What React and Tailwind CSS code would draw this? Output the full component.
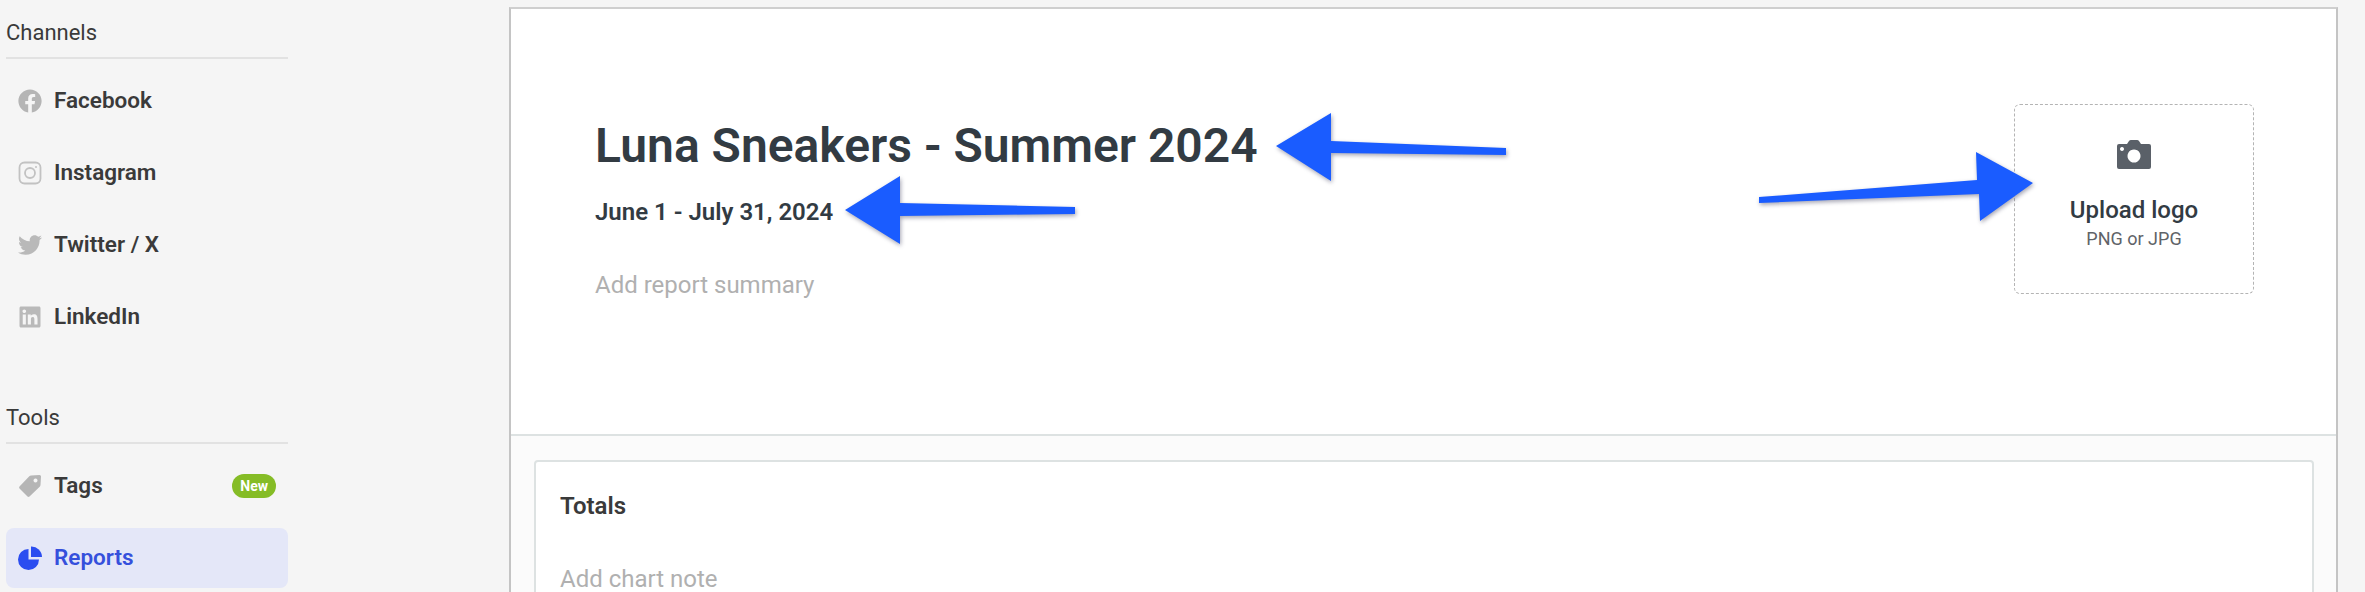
import React from 'react';
import { FaFacebook, FaTwitter, FaLinkedin } from 'react-icons/fa';

const InstagramIcon = () => (
  <svg viewBox="0 0 24 24" className="w-6 h-6" fill="none" stroke="#c2c2c2" strokeWidth="1.8">
    <rect x="1.5" y="1.5" width="21" height="21" rx="5" />
    <circle cx="12" cy="12" r="5" />
    <circle cx="18" cy="6" r="1" fill="#c2c2c2" stroke="none" />
  </svg>
);

const TagIcon = () => (
  <svg viewBox="0 0 24 24" className="w-6 h-6" fill="#b5b5b5">
    <path fillRule="evenodd" d="M13 1.5 L21.5 1 Q23 1 23 2.5 L22.5 11 Q22.4 12 21.7 12.7 L11.5 22.5 Q10.5 23.4 9.5 22.5 L1.5 14.5 Q0.6 13.5 1.5 12.5 L11.3 2.2 Q12 1.6 13 1.5 Z M17.5 4.5 a2 2 0 1 0 0.01 0 Z" />
  </svg>
);

const PieIcon = () => (
  <svg viewBox="0 0 24 24" className="w-6 h-6" fill="#2b4df0">
    <path d="M10.5 3 V13.5 H21 A10.5 10.5 0 1 1 10.5 3 Z" />
    <path d="M13 0.5 A10.5 10.5 0 0 1 24 11 H13 Z" />
  </svg>
);

const CameraIcon = () => (
  <svg viewBox="0 0 34 29" className="w-[34px] h-[29px]" fill="#5a6068">
    <path fillRule="evenodd" d="M2 4 H10 L12 1 Q12.6 0 14 0 H20 Q21.4 0 22 1 L24 4 H32 Q34 4 34 6 V27 Q34 29 32 29 H2 Q0 29 0 27 V6 Q0 4 2 4 Z M17 9.5 a6.5 6.5 0 1 0 0.01 0 Z M5 7 a2 2 0 1 0 0.01 0 Z" />
  </svg>
);

const channels = [
  { label: 'Facebook', icon: <FaFacebook className="w-6 h-6 text-[#b5b5b5]" /> },
  { label: 'Instagram', icon: <InstagramIcon /> },
  { label: 'Twitter / X', icon: <FaTwitter className="w-6 h-6 text-[#b9b9b9]" /> },
  { label: 'LinkedIn', icon: <FaLinkedin className="w-6 h-6 text-[#b9b9b9]" /> },
];

const NavRow = ({ icon, label, badge, active }) => (
  <div className={`h-[60px] flex items-center gap-3 pl-3 pr-3 rounded-lg text-[22.5px] font-semibold ${
    active ? 'bg-[#e4e7f8] text-[#3550dc]' : 'text-[#3a3a3a]'
  }`}>
    {icon}
    <span>{label}</span>
    {badge && (
      <span className="ml-auto h-6 px-2 rounded-full bg-[#85bc26] text-white text-sm font-bold flex items-center">
        {badge}
      </span>
    )}
  </div>
);

const SectionTitle = ({ children }) => (
  <div className="h-[39px] border-b-2 border-[#e2e2e2] text-[22px] leading-[26px] text-[#3a3a3a] mb-3">
    {children}
  </div>
);

const Sidebar = () => (
  <aside className="w-[282px] ml-[6px] pt-[20px] shrink-0">
    <SectionTitle>Channels</SectionTitle>
    <div className="flex flex-col gap-3">
      {channels.map((c) => (
        <NavRow key={c.label} icon={c.icon} label={c.label} />
      ))}
    </div>
    <div className="mt-[58px]">
      <SectionTitle>Tools</SectionTitle>
    </div>
    <div className="flex flex-col gap-3">
      <NavRow icon={<TagIcon />} label="Tags" badge="New" />
      <NavRow icon={<PieIcon />} label="Reports" active />
    </div>
  </aside>
);

const Arrows = () => (
  <svg className="absolute inset-0 w-full h-full pointer-events-none drop-shadow-[1px_2px_2px_rgba(0,0,40,0.35)]" viewBox="0 0 2365 592" fill="#1a5cff">
    <polygon points="1276,146 1331,113 1331,141 1506,148 1506,155 1331,153 1331,181" />
    <polygon points="845,210 900,176 900,203 1075,207 1075,214 900,216 900,244" />
    <polygon points="2033,183 1976,152 1977,180 1759,197 1759,203 1979,194 1980,221" />
  </svg>
);

export default function App() {
  return (
    <div className="relative flex h-[592px] w-full overflow-hidden bg-[#f5f5f5] font-[Roboto,sans-serif]">
      <Sidebar />

      <main className="ml-[221px] mt-[7px] w-[1829px] shrink-0 bg-white border-l-2 border-r-2 border-t-2 border-l-[#c4c4c4] border-r-[#c4c4c4] border-t-[#cfcfcf] flex flex-col">
        <section className="h-[427px] shrink-0 flex border-b-2 border-[#dde2e2] pl-[84px] pr-[82px]">
          <div className="flex-1 pt-[108px]">
            <h1 className="text-5xl leading-[58px] font-semibold text-[#323b43]">Luna Sneakers - Summer 2024</h1>
            <p className="mt-[23px] text-2xl leading-7 font-semibold text-[#323b43]">June 1 - July 31, 2024</p>
            <p className="mt-[45px] text-2xl leading-7 text-[#b0b0b0]">Add report summary</p>
          </div>
          <div className="mt-[95px] w-[240px] h-[190px] border border-dashed border-[#b4b4b4] rounded-md flex flex-col items-center pt-[35px]">
            <CameraIcon />
            <span className="mt-[27px] text-2xl leading-7 font-medium text-[#323b43]">Upload logo</span>
            <span className="mt-[3px] text-lg leading-6 text-[#5f6368]">PNG or JPG</span>
          </div>
        </section>

        <section className="flex-1 bg-[#fbfbfb] pl-[23px] pr-[22px] pt-[24px]">
          <div className="h-[200px] bg-white border-2 border-[#dde2e2] rounded-[4px] pl-[24px] pt-[30px]">
            <h2 className="text-2xl leading-7 font-semibold text-[#3a3a3a]">Totals</h2>
            <p className="mt-[45px] text-2xl leading-7 text-[#b0b0b0]">Add chart note</p>
          </div>
        </section>
      </main>

      <Arrows />
    </div>
  );
}
